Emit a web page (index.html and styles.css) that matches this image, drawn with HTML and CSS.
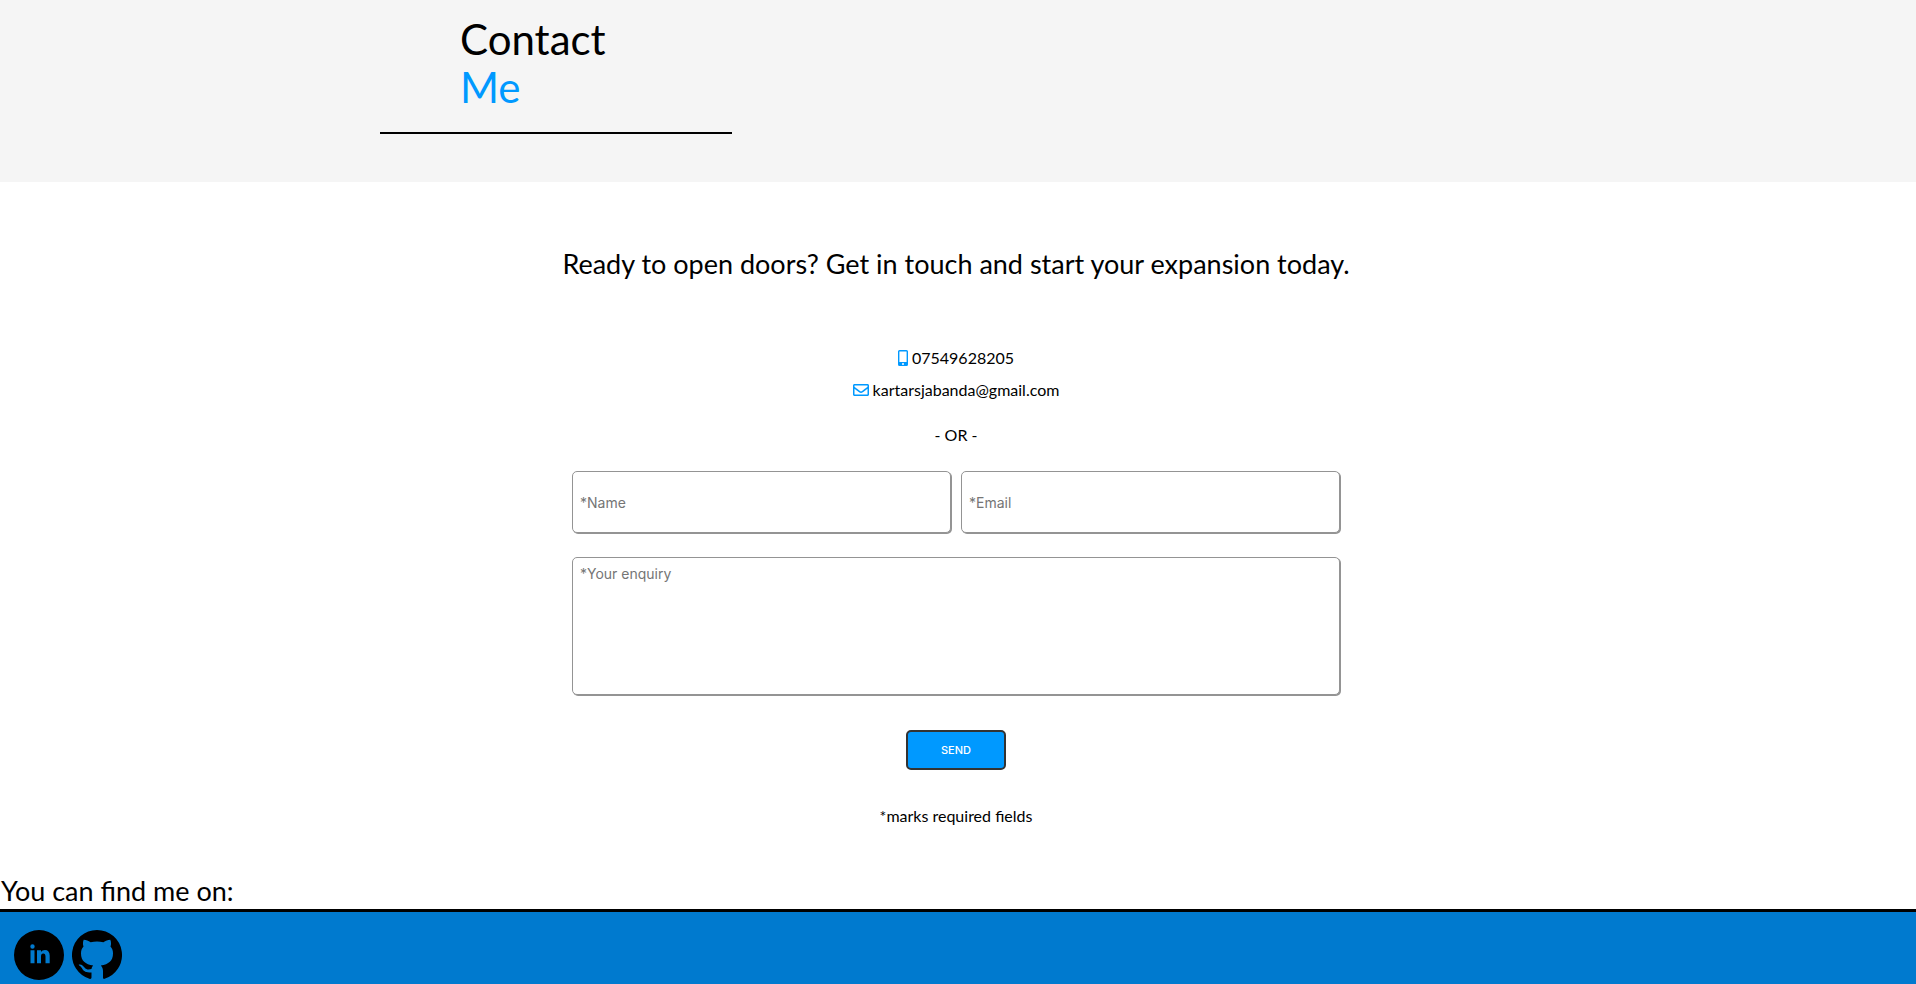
FILE: index.html
```html
<!DOCTYPE html>
<html lang="en">
<head>
<meta charset="utf-8">
<meta name="viewport" content="width=device-width, initial-scale=1">
<title>Contact Me</title>
<link rel="stylesheet" href="styles.css">
</head>
<body>
<header class="page-header">
  <h1 class="page-title">Contact <span class="accent">Me</span></h1>
</header>
<main class="contact">
  <h2 class="tagline">Ready to open doors? Get in touch and start your expansion today.</h2>
  <div class="details">
    <p class="detail">
      <svg class="icon-phone" viewBox="0 0 10 16" aria-hidden="true"><path fill-rule="evenodd" d="M1.5 0h7A1.5 1.5 0 0 1 10 1.500v13A1.500 1.500 0 0 1 8.500 16h-7A1.500 1.500 0 0 1 0 14.500v-13A1.500 1.500 0 0 1 1.500 0zM1.400 1.500v10.500h7.200V1.500zM5 13a1 1 0 1 0 0 2 1 1 0 0 0 0-2z"/></svg>
      <span>07549628205</span>
    </p>
    <p class="detail">
      <svg class="icon-mail" viewBox="0 0 512 512" aria-hidden="true"><path d="M464 64H48C21.490 64 0 85.490 0 112v288c0 26.510 21.490 48 48 48h416c26.510 0 48-21.490 48-48V112c0-26.510-21.490-48-48-48zm0 48v40.805c-22.422 18.259-58.168 46.651-134.587 106.490-16.841 13.247-50.201 45.072-73.413 44.701-23.208.375-56.579-31.459-73.413-44.701C106.180 199.465 70.425 171.067 48 152.805V112h416zM48 400V214.398c22.914 18.251 55.409 43.862 104.938 82.646 21.857 17.205 60.134 55.186 103.062 54.955 42.717.231 80.509-37.199 103.053-54.947 49.528-38.783 82.032-64.401 104.947-82.653V400H48z"/></svg>
      <span>kartarsjabanda@gmail.com</span>
    </p>
  </div>
  <p class="separator">- OR -</p>
  <form class="form">
    <input class="field" type="text" name="name" placeholder="*Name" aria-label="Name">
    <input class="field" type="email" name="email" placeholder="*Email" aria-label="Email">
    <textarea class="field message" name="message" placeholder="*Your enquiry" aria-label="Your enquiry"></textarea>
    <button class="send" type="button">SEND</button>
  </form>
  <p class="note">*marks required fields</p>
</main>
<h3 class="find-me">You can find me on:</h3>
<footer class="footer">
  <a class="social" href="#linkedin" aria-label="LinkedIn">
    <svg viewBox="0 0 50 50" aria-hidden="true"><path fill-rule="evenodd" d="M25 0a25 25 0 1 1 0 50 25 25 0 0 1 0-50zM16.500 20.300v12.900h4V20.300zM18.500 14.300a2.200 2.200 0 1 0 0 4.400 2.200 2.200 0 0 0 0-4.400zM23 20.300v12.900h4v-6.700c0-1.800.700-2.900 2.300-2.900 1.500 0 2.200 1.100 2.200 2.900v6.700h4.200v-7.600c0-3.700-1.800-5.600-4.700-5.600-1.900 0-3.300.9-4 2.100v-1.800z"/></svg>
  </a>
  <a class="social" href="#github" aria-label="GitHub">
    <svg viewBox="0 0 50 50" aria-hidden="true"><path d="M25 0a25 25 0 0 0-7 49 1.400 1.400 0 0 0 1.500-1.400v-5.200c-6 .8-8.300-1.700-9.700-4.300-.7-1.300-1.500-2-2.600-2.700-.9-.7-.4-1.100.6-1 2.200.2 3.500 1.600 4.700 3.100 1.800 2.300 4.200 2.500 7 1.600.2-1.600.8-2.800 1.700-3.700-7.900-.9-12.200-4.600-12.200-12.100 0-2.800.8-5 2.500-6.800-.8-2.200-.7-4.500.2-6.700 2.500 0 4.700 1.100 6.900 2.500 4.200-1 8.600-1 12.800 0 2.200-1.400 4.400-2.500 6.900-2.500.9 2.200 1 4.500.2 6.700 1.700 1.800 2.500 4 2.500 6.800 0 7.500-4.300 11.200-12.200 12.100 1.500 1.500 2.200 3.300 2.200 5.600v6.600A1.400 1.400 0 0 0 32 49 25 25 0 0 0 25 0z"/></svg>
  </a>
</footer>
</body>
</html>
```
FILE: styles.css
```css
* {
  box-sizing: border-box;
}

body {
  margin: 0;
  min-height: 100vh;
  display: flex;
  flex-direction: column;
  background: #fff;
  color: #000;
  font: 16px/32px Lato, sans-serif;
}

h1, h2, h3, p {
  margin: 0;
  font-weight: 400;
}

.page-header {
  padding: 15px 380px 48px;
  background: #f5f5f5;
}

.page-title {
  width: 352px;
  padding: 0 80px 21px;
  border-bottom: 2px solid #000;
  font-size: 42px;
  line-height: 48px;
}

.accent {
  display: block;
  color: #09f;
}

.contact {
  display: flex;
  flex-direction: column;
  align-items: center;
  padding: 62px 4px 0 0;
}

.tagline {
  font-size: 27px;
  line-height: 40px;
}

.details {
  display: flex;
  flex-direction: column;
  align-items: center;
  margin-top: 58px;
}

.detail {
  display: flex;
  align-items: center;
  gap: 4px;
}

.icon-phone,
.icon-mail {
  height: 16px;
  fill: #09f;
}

.separator {
  margin: 13px 0 20px;
}

.form {
  display: grid;
  grid-template-columns: 1fr 1fr;
  gap: 24px 10px;
  width: 100%;
  max-width: 768px;
}

.field {
  width: 100%;
  height: 62px;
  padding: 7px;
  border: 1px solid #949494;
  border-radius: 5px;
  background: #fff;
  box-shadow: 1px 1px 0 #949494;
  font: 14px/17px Inter, sans-serif;
}

.field::placeholder {
  color: #757575;
}

.message {
  grid-column: 1 / -1;
  height: 138px;
  resize: none;
}

.send {
  grid-column: 1 / -1;
  justify-self: center;
  width: 100px;
  height: 40px;
  margin-top: 11px;
  border: 2px solid #333;
  border-radius: 5px;
  background: #09f;
  color: #fff;
  font: 500 11px/16px Inter, sans-serif;
}

.note {
  margin-top: 30px;
}

.find-me {
  margin-top: 41px;
  padding-left: 1px;
  font-size: 27px;
  line-height: 36px;
}

.footer {
  flex: 1;
  display: flex;
  gap: 8px;
  padding: 18px 14px 3px;
  border-top: 3px solid #000;
  background: #007acf;
}

.social,
.social svg {
  display: block;
  width: 50px;
  height: 50px;
}
```
